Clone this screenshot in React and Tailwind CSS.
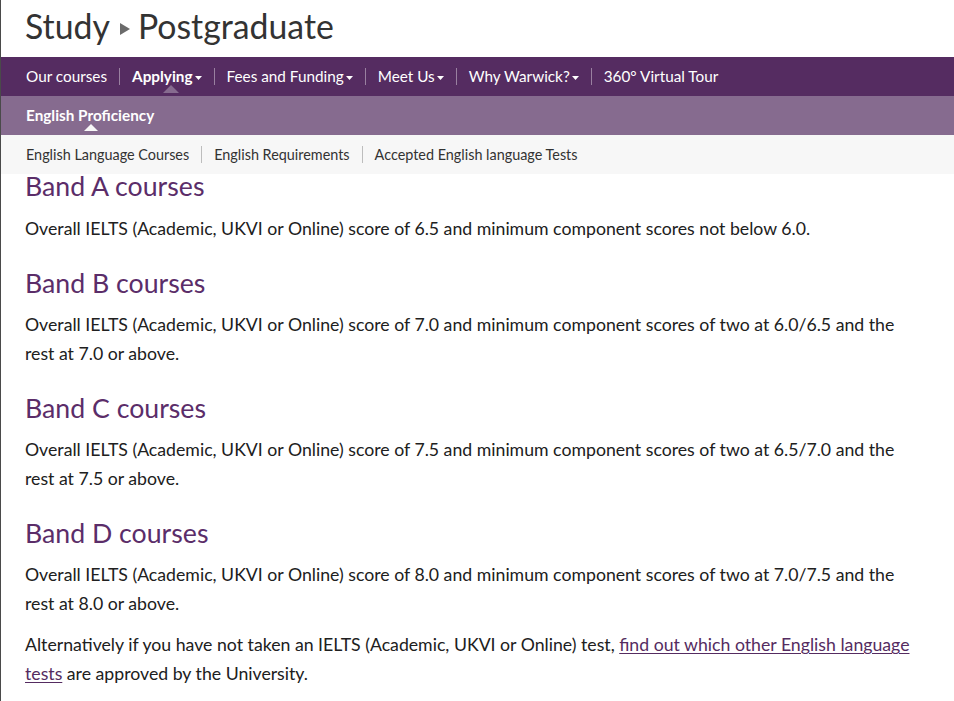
import React from "react";

const font = { fontFamily: "Lato, 'Open Sans', sans-serif" };

function Caret() {
  return (
    <svg width="7" height="4" viewBox="0 0 7 4" className="ml-[2px] mt-[3px]">
      <path d="M0 0h7L3.5 4z" fill="currentColor" />
    </svg>
  );
}

function Sep({ className = "bg-white/40" }) {
  return <span className={`mx-[12px] h-[17px] w-px ${className}`} />;
}

const mainNav = [
  { label: "Our courses" },
  { label: "Applying", caret: true, active: true },
  { label: "Fees and Funding", caret: true },
  { label: "Meet Us", caret: true },
  { label: "Why Warwick?", caret: true },
  { label: "360° Virtual Tour" },
];

const subNav = [
  "English Language Courses",
  "English Requirements",
  "Accepted English language Tests",
];

const bands = [
  {
    title: "Band A courses",
    text: "Overall IELTS (Academic, UKVI or Online) score of 6.5 and minimum component scores not below 6.0.",
  },
  {
    title: "Band B courses",
    text: "Overall IELTS (Academic, UKVI or Online) score of 7.0 and minimum component scores of two at 6.0/6.5 and the rest at 7.0 or above.",
  },
  {
    title: "Band C courses",
    text: "Overall IELTS (Academic, UKVI or Online) score of 7.5 and minimum component scores of two at 6.5/7.0 and the rest at 7.5 or above.",
  },
  {
    title: "Band D courses",
    text: "Overall IELTS (Academic, UKVI or Online) score of 8.0 and minimum component scores of two at 7.0/7.5 and the rest at 8.0 or above.",
  },
];

export default function App() {
  return (
    <div className="min-h-[701px] border-l border-[#4a4a4a] bg-white" style={font}>
      {/* Page title */}
      <div className="flex h-[57px] items-center pl-[24px] pb-[4px] text-[33.8px] leading-none text-[#333]">
        <span>Study</span>
        <svg width="10" height="12" viewBox="0 0 10 12" className="ml-[10px] mr-[8px] mt-[4px]">
          <path d="M0 0L10 6L0 12z" fill="#6b6b6b" />
        </svg>
        <span>Postgraduate</span>
      </div>

      {/* Primary navigation */}
      <nav className="flex h-[39px] items-center bg-[#552c61] pl-[25px] text-[15.3px] text-white">
        {mainNav.map((item, i) => (
          <React.Fragment key={item.label}>
            {i > 0 && <Sep />}
            <span className={`relative flex items-center ${item.active ? "font-bold" : ""}`}>
              {item.label}
              {item.caret && <Caret />}
              {item.active && (
                <span className="absolute left-1/2 top-[20px] h-0 w-0 -translate-x-[4px] border-x-[8px] border-b-[8px] border-x-transparent border-b-[#866b8f]" />
              )}
            </span>
          </React.Fragment>
        ))}
      </nav>

      {/* Section navigation */}
      <div className="flex h-[39px] items-center bg-[#866b8f] pl-[25px] text-[15.3px] font-bold text-white">
        <span className="relative">
          English Proficiency
          <span className="absolute left-[58px] top-[20px] h-0 w-0 border-x-[7px] border-b-[7px] border-x-transparent border-b-[#f7f7f7]" />
        </span>
      </div>

      {/* Sub navigation */}
      <div className="flex h-[39px] items-center bg-[#f7f7f7] pl-[25px] text-[14.4px] text-[#333]">
        {subNav.map((label, i) => (
          <React.Fragment key={label}>
            {i > 0 && <Sep className="bg-[#bdbdbd]" />}
            <span>{label}</span>
          </React.Fragment>
        ))}
      </div>

      {/* Content */}
      <main className="flex flex-col pl-[24px] pr-[34px] text-[17.7px] leading-[29px] text-[#202020]">
        {bands.map((band, i) => (
          <section key={band.title} className={i > 0 ? "mt-[27px]" : "-mt-[1px]"}>
            <h2
              className={`text-[26.7px] leading-[26px] text-[#5b2d69] ${i === 0 ? "mb-[15px]" : "mb-[14px]"}`}
            >
              {band.title}
            </h2>
            <p>{band.text}</p>
          </section>
        ))}
        <p className="mt-[12px]">
          Alternatively if you have not taken an IELTS (Academic, UKVI or Online) test,{" "}
          <a href="#" className="text-[#552c61] underline decoration-1 underline-offset-2">
            find out which other English language tests
          </a>{" "}
          are approved by the University.
        </p>
      </main>
    </div>
  );
}
